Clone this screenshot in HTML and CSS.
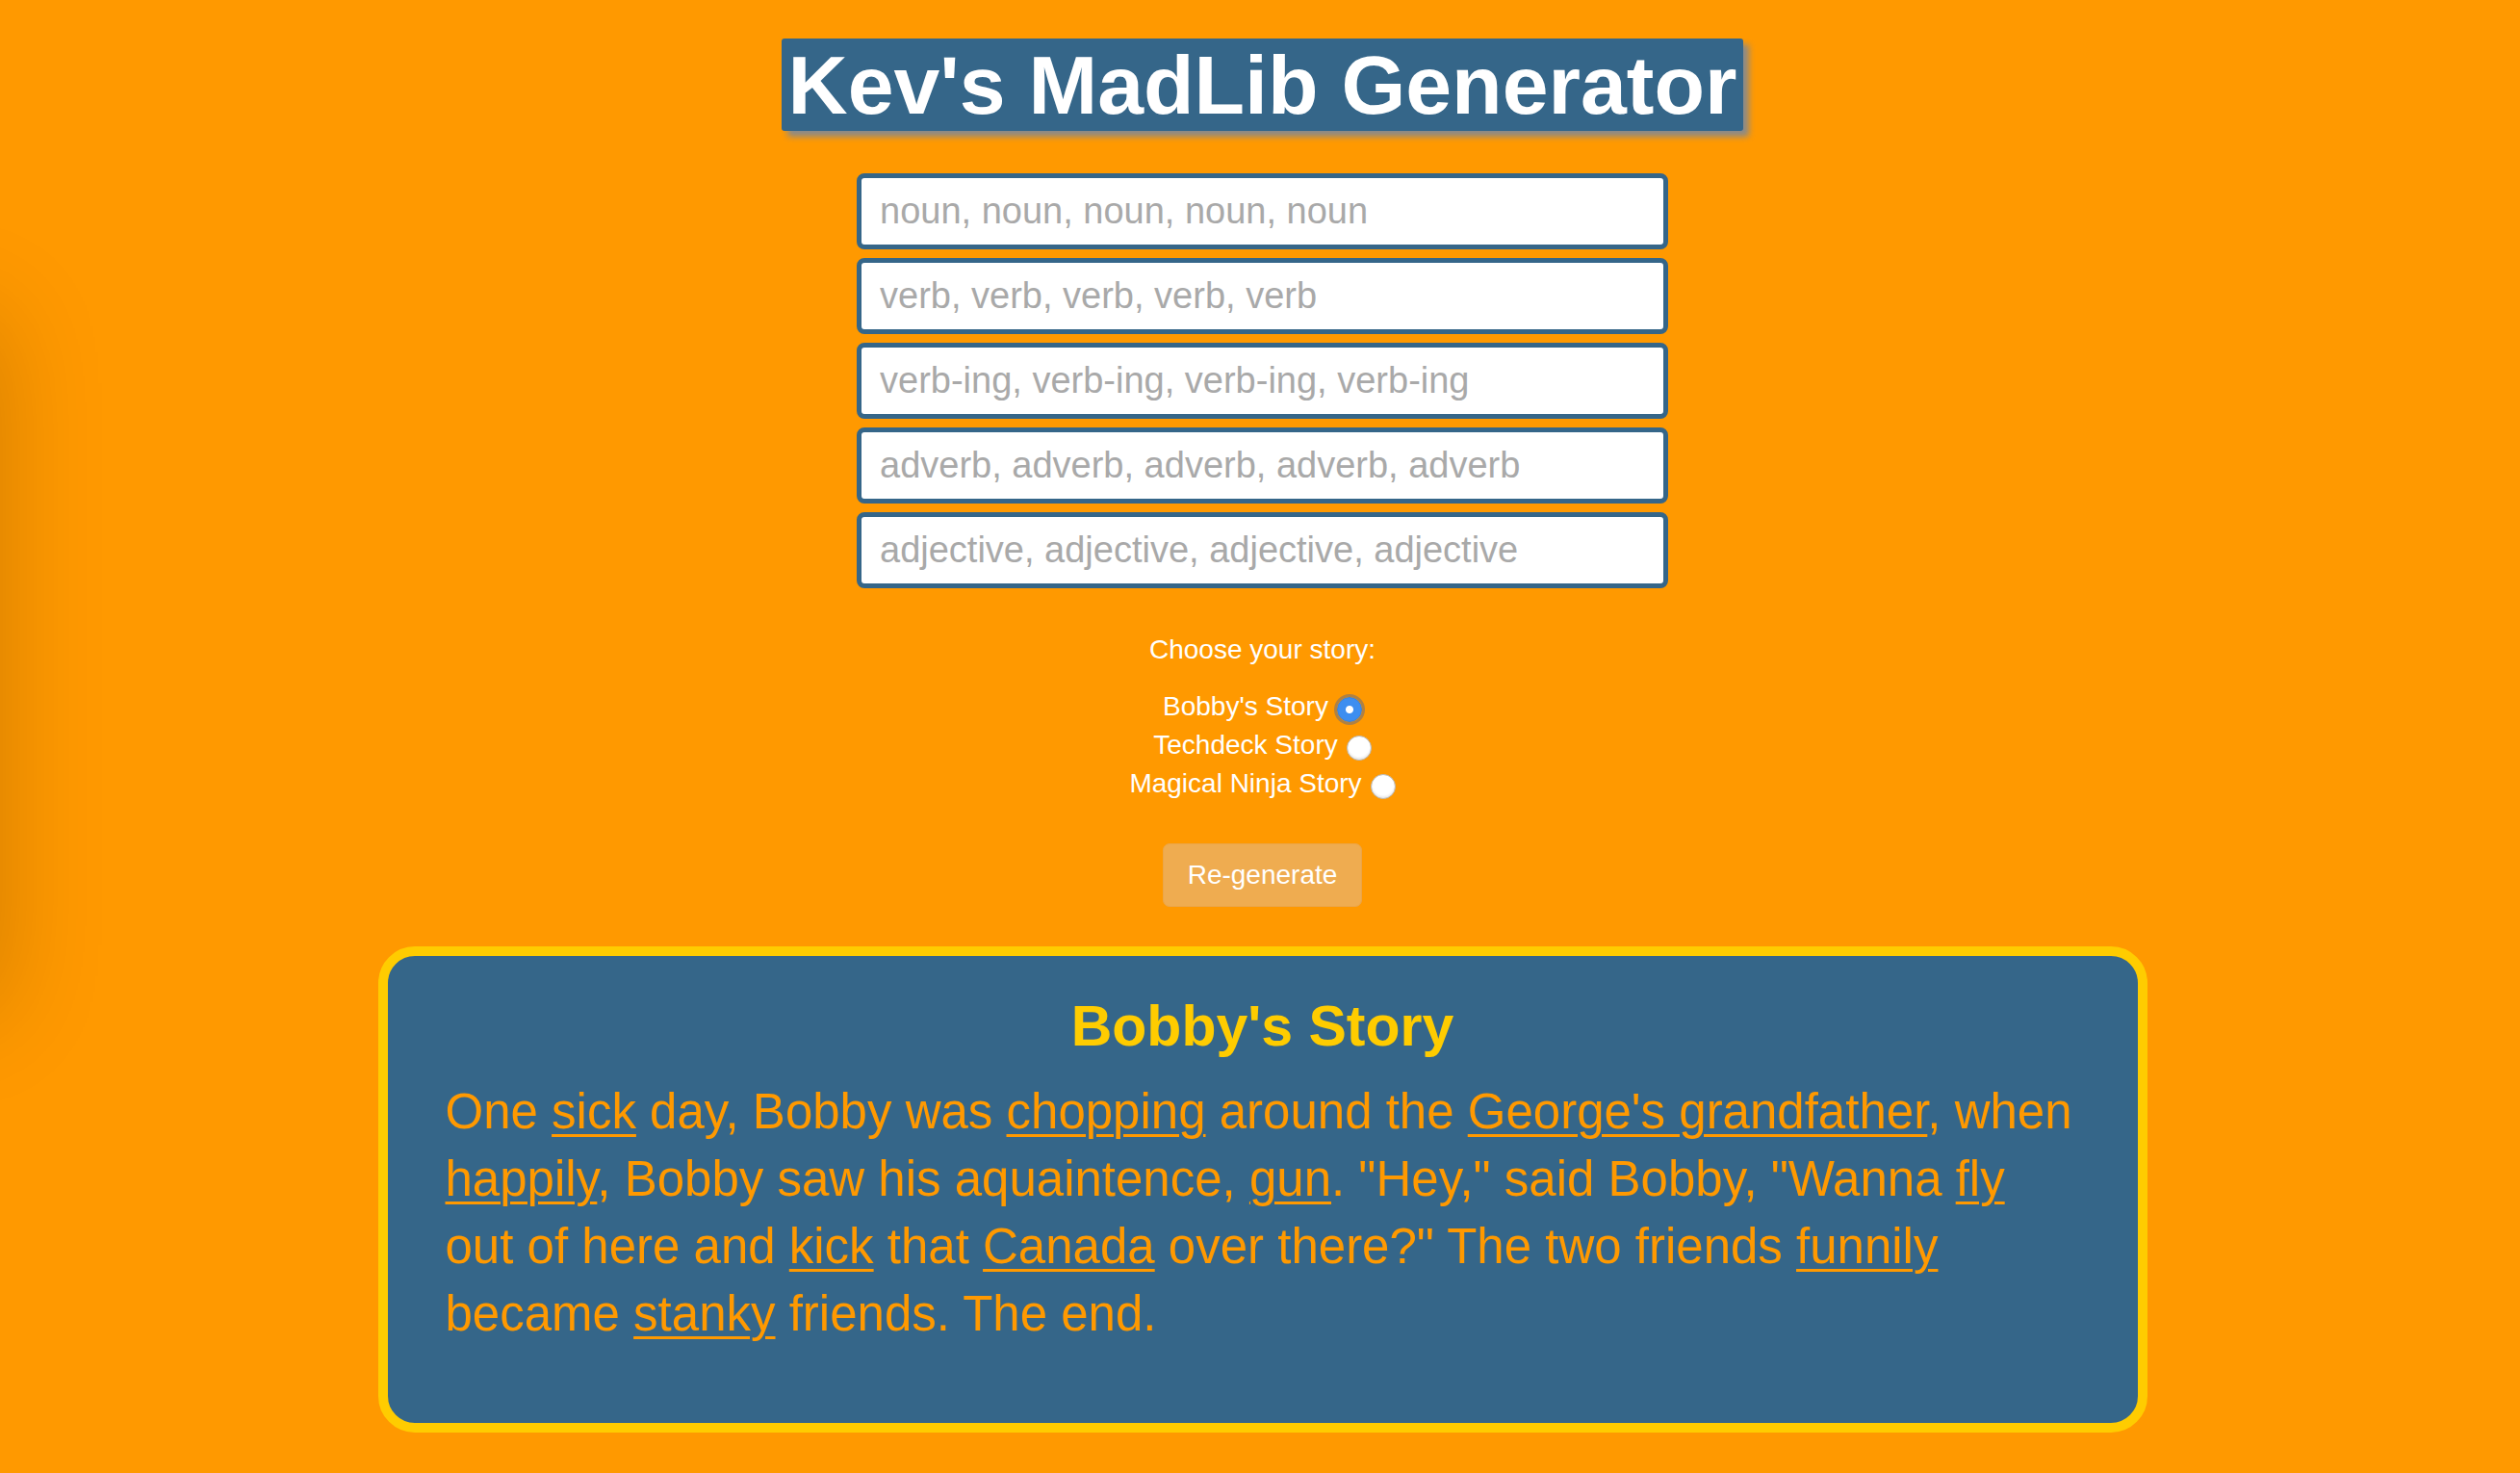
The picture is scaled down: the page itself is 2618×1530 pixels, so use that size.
FILE: index.html
```html
<!DOCTYPE html>
<html lang="en">
<head>
<meta charset="utf-8">
<title>Kev's MadLib Generator</title>
<link rel="stylesheet" href="styles.css">
</head>
<body>
<div class="edge-shadow"></div>
<main class="page">
  <h1 class="title">Kev's MadLib Generator</h1>
  <form class="fields">
    <input class="field" type="text" placeholder="noun, noun, noun, noun, noun">
    <input class="field" type="text" placeholder="verb, verb, verb, verb, verb">
    <input class="field" type="text" placeholder="verb-ing, verb-ing, verb-ing, verb-ing">
    <input class="field" type="text" placeholder="adverb, adverb, adverb, adverb, adverb">
    <input class="field" type="text" placeholder="adjective, adjective, adjective, adjective">
  </form>
  <p class="choose">Choose your story:</p>
  <div class="stories">
    <label class="story-opt">Bobby's Story<input class="radio" type="radio" name="story" checked></label>
    <label class="story-opt">Techdeck Story<input class="radio" type="radio" name="story"></label>
    <label class="story-opt">Magical Ninja Story<input class="radio" type="radio" name="story"></label>
  </div>
  <button class="regen" type="button">Re-generate</button>
  <section class="story-box">
    <h2 class="story-title">Bobby's Story</h2>
    <p class="story-text">One <u>sick</u> day, Bobby was <u>chopping</u> around the <u>George's grandfather</u>, when <u>happily</u>, Bobby saw his aquaintence, <u>gun</u>. "Hey," said Bobby, "Wanna <u>fly</u> out of here and <u>kick</u> that <u>Canada</u> over there?" The two friends <u>funnily</u> became <u>stanky</u> friends. The end.</p>
  </section>
</main>
</body>
</html>
```

FILE: styles.css
```css
html, body {
  background: #ff9900;
}
body {
  margin: 8px;
  font-family: "Liberation Sans", Arial, Helvetica, sans-serif;
  color: #ffffff;
}
.edge-shadow {
  position: absolute;
  left: -140px;
  top: 330px;
  width: 140px;
  height: 720px;
  box-shadow: 0 0 110px rgba(0, 0, 0, 0.18);
}
.page {
  display: flex;
  flex-direction: column;
  align-items: center;
  padding-left: 5px;
}
.title {
  margin: 32px 0 0;
  padding: 0 7px;
  background: #356689;
  color: #ffffff;
  font-size: 86px;
  line-height: 96px;
  font-weight: bold;
  box-shadow: 6px 6px 6px #8a8a8a;
  border-radius: 3px;
}
.fields {
  margin-top: 44px;
  display: flex;
  flex-direction: column;
  gap: 9px;
}
.field {
  box-sizing: border-box;
  width: 843px;
  height: 79px;
  margin: 0;
  padding: 0 19px;
  border: 5px solid #356689;
  border-radius: 8px;
  background: #ffffff;
  font-family: "Liberation Sans", Arial, Helvetica, sans-serif;
  font-size: 38px;
  color: #333;
  outline: none;
}
.field::placeholder {
  color: #a9a9a9;
}
.choose {
  margin: 44px 0 0;
  font-size: 28px;
  line-height: 40px;
}
.stories {
  margin-top: 19px;
  display: flex;
  flex-direction: column;
  align-items: center;
}
.story-opt {
  display: flex;
  align-items: center;
  gap: 9px;
  font-size: 28px;
  line-height: 40px;
}
.radio {
  appearance: none;
  -webkit-appearance: none;
  box-sizing: border-box;
  width: 26px;
  height: 26px;
  margin: 6px 0 0;
  border-radius: 50%;
  border: 1px solid #b8b8b8;
  background: #ffffff;
  box-shadow: inset 0 -2px 2px rgba(0, 0, 0, 0.08);
}
.radio:checked {
  border-color: #3580de;
  background: radial-gradient(circle, #ffffff 0 3.5px, #3d8ef0 4.5px);
  box-shadow: 0 0 0 3px rgba(110, 110, 120, 0.55);
}
.regen {
  margin-top: 42px;
  height: 66px;
  padding: 0 25px;
  border: 1px solid #eba548;
  border-radius: 7px;
  background: #efac50;
  color: #ffffff;
  font-family: "Liberation Sans", Arial, Helvetica, sans-serif;
  font-size: 28px;
}
.story-box {
  box-sizing: border-box;
  width: 1838px;
  margin-top: 41px;
  padding: 38px 60px 78px;
  border: 10px solid #ffcc00;
  border-radius: 38px;
  background: #356689;
}
.story-title {
  margin: 0;
  text-align: center;
  color: #ffcc00;
  font-size: 59px;
  line-height: 70px;
  font-weight: bold;
}
.story-text {
  margin: 19px 0 0;
  color: #ff9900;
  font-size: 51px;
  line-height: 70px;
  text-align: left;
}
.story-text u {
  text-decoration-thickness: 3px;
  text-underline-offset: 6px;
}
```
